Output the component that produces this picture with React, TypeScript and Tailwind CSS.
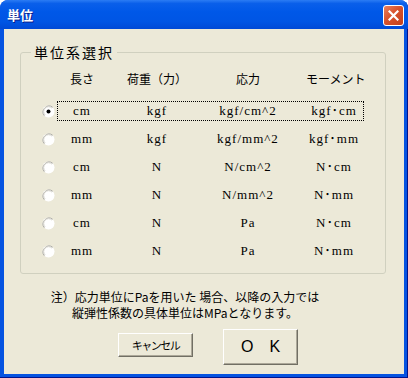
const ROWS: string[][] = [
  ["cm", "kgf", "kgf/cm^2", "kgf･cm"],
  ["mm", "kgf", "kgf/mm^2", "kgf･mm"],
  ["cm", "N", "N/cm^2", "N･cm"],
  ["mm", "N", "N/mm^2", "N･mm"],
  ["cm", "N", "Pa", "N･cm"],
  ["mm", "N", "Pa", "N･mm"],
];

const HEADERS = ["長さ", "荷重（力）", "応力", "モーメント"];

function Radio({ checked }: { checked: boolean }) {
  return (
    <svg width="13" height="13" viewBox="0 0 13 13" className="shrink-0">
      <circle cx="6.5" cy="6.5" r="6" fill="#ffffff" />
      <path d="M10.7 2.3 A6 6 0 0 0 2.3 10.7" stroke="#a7a6a0" strokeWidth="1" fill="none" />
      <path d="M9.9 3.1 A4.8 4.8 0 0 0 3.1 9.9" stroke="#d6d4cc" strokeWidth="1" fill="none" />
      {checked && <circle cx="6.5" cy="6.5" r="2" fill="#000000" />}
    </svg>
  );
}

function Cells({ values, header }: { values: string[]; header?: boolean }) {
  const font = header
    ? "font-['Noto_Sans_CJK_JP',sans-serif] text-[12px]"
    : "font-['Liberation_Serif','Noto_Sans_CJK_JP',serif] text-[13px] tracking-[1px]";
  return (
    <div className={`flex items-center ${font} leading-[16px] text-black`}>
      <span className="w-[48px] text-center">{values[0]}</span>
      <span className="w-[102px] text-center">{values[1]}</span>
      <span className="w-[80px] text-center">{values[2]}</span>
      <span className="ml-[18px] w-[56px] text-center whitespace-nowrap">{values[3]}</span>
    </div>
  );
}

export default function App() {
  return (
    <div className="flex h-[378px] w-[408px] flex-col overflow-hidden rounded-t-[8px] bg-[#0553E1] shadow-[inset_-1px_-1px_#00138C]">
      {/* title bar */}
      <div className="flex h-[29px] shrink-0 items-start bg-[linear-gradient(to_bottom,#2B7CF4_0%,#0A5FEA_12%,#0058E8_40%,#0055E4_75%,#0049D6_100%)]">
        <span className="mt-[6px] ml-[7px] font-['Noto_Sans_CJK_JP',sans-serif] text-[13px] font-bold leading-[18px] text-white [text-shadow:1px_1px_#0A1C8A]">
          単位
        </span>
        <div className="mt-[5px] mr-[4px] ml-auto flex h-[21px] w-[21px] items-center justify-center rounded-[3px] border border-white bg-[linear-gradient(135deg,#E9815F_0%,#D8522C_45%,#C2401C_100%)]">
          <svg width="11" height="11" viewBox="0 0 11 11">
            <path d="M1.5 1.5 L9.5 9.5 M9.5 1.5 L1.5 9.5" stroke="#ffffff" strokeWidth="2.2" strokeLinecap="square" />
          </svg>
        </div>
      </div>

      {/* body */}
      <div className="mx-[4px] mb-[4px] flex flex-1 flex-col bg-[#ECE9D8] pt-[15px]">
        <fieldset className="ml-[16px] h-[230px] w-[366px] rounded-[3px] border border-[#D0D0BF]">
          <legend className="ml-[10px] px-[3px] font-['Noto_Sans_CJK_JP',sans-serif] text-[14px] leading-[16px] tracking-[2px] text-black">
            単位系選択
          </legend>

          <div className="mt-[11px] flex pl-[37px]">
            <Cells values={HEADERS} header />
          </div>

          <div className="mt-[10px] flex flex-col">
            {ROWS.map((r, i) => (
              <div key={i} className="flex h-[28px] items-center pl-[21px]">
                <Radio checked={i === 0} />
                <div
                  className={`ml-[2px] flex h-[20px] w-[307px] items-center border border-dotted ${
                    i === 0 ? "border-black" : "border-transparent"
                  }`}
                >
                  <Cells values={r} />
                </div>
              </div>
            ))}
          </div>
        </fieldset>

        <div className="mt-[15px] ml-[36px] w-[290px] text-center font-['Noto_Sans_CJK_JP',sans-serif] text-[12px] leading-[16px] text-black">
          <p>注）応力単位にPaを用いた 場合、以降の入力では</p>
          <p>縦弾性係数の具体単位はMPaとなります。</p>
        </div>

        <div className="mt-[8px] ml-[114px] flex items-start gap-[30px]">
          <button
            type="button"
            className="mt-[4px] flex h-[24px] w-[75px] items-center justify-center border border-t-white border-l-white border-r-[#716F64] border-b-[#716F64] bg-[#ECE9D8] font-['Noto_Sans_CJK_JP',sans-serif] text-[11px] tracking-[-1.5px] text-black shadow-[inset_-1px_-1px_#ACA899]"
          >
            キャンセル
          </button>
          <button
            type="button"
            className="flex h-[36px] w-[75px] items-center justify-center border border-t-white border-l-white border-r-[#716F64] border-b-[#716F64] bg-[#ECE9D8] font-['Liberation_Sans','Noto_Sans_CJK_JP',sans-serif] text-[16px] text-black shadow-[inset_-1px_-1px_#ACA899]"
          >
            O　K
          </button>
        </div>
      </div>
    </div>
  );
}
